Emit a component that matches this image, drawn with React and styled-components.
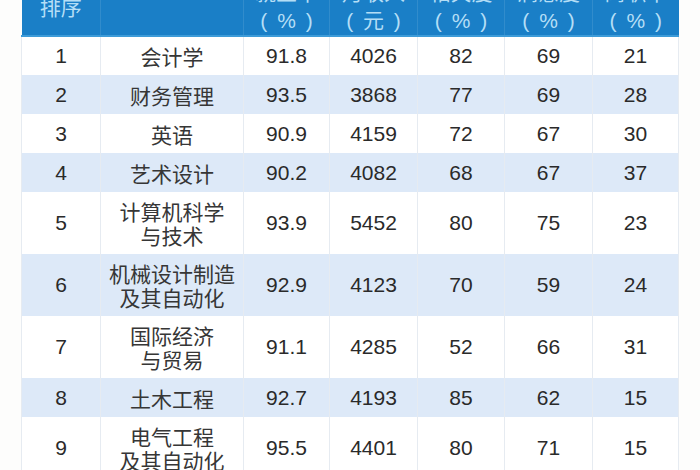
import React from 'react';
import styled, { createGlobalStyle } from 'styled-components';

const GlobalStyle = createGlobalStyle`
  html, body {
    margin: 0;
    padding: 0;
    background: #fdfdfc;
    overflow: hidden;
  }
`;

const columns = [79, 143, 86, 88, 87, 88, 86];

const headers = [
  ['排序'],
  [''],
  ['就业率', '( % )'],
  ['月收入', '( 元 )'],
  ['相关度', '( % )'],
  ['满意度', '( % )'],
  ['离职率', '( % )'],
];

const rows = [
  ['1', ['会计学'], '91.8', '4026', '82', '69', '21'],
  ['2', ['财务管理'], '93.5', '3868', '77', '69', '28'],
  ['3', ['英语'], '90.9', '4159', '72', '67', '30'],
  ['4', ['艺术设计'], '90.2', '4082', '68', '67', '37'],
  ['5', ['计算机科学', '与技术'], '93.9', '5452', '80', '75', '23'],
  ['6', ['机械设计制造', '及其自动化'], '92.9', '4123', '70', '59', '24'],
  ['7', ['国际经济', '与贸易'], '91.1', '4285', '52', '66', '31'],
  ['8', ['土木工程'], '92.7', '4193', '85', '62', '15'],
  ['9', ['电气工程', '及其自动化'], '95.5', '4401', '80', '71', '15'],
];

const Page = styled.div`
  height: 470px;
  overflow: hidden;
  padding-left: 21px;
`;

const Table = styled.table`
  margin-top: -23px;
  border-collapse: collapse;
  table-layout: fixed;
  width: 657px;
  font-family: "Liberation Sans", "Noto Sans CJK SC", sans-serif;
  color: #2a2a2a;
`;

const HeadCell = styled.th`
  height: 58px;
  padding: 0;
  background: #1a7fc7;
  color: #b4def6;
  font-weight: normal;
  font-size: 21px;
  line-height: 29px;
  text-align: center;
  border-left: 1px solid rgba(255, 255, 255, 0.1);
  border-bottom: 2px solid #3d9bd8;
  &:first-child {
    border-left: none;
  }
`;

const HeadLine = styled.div`
  font-family: ${(p) =>
    p.$cjk ? '"Noto Sans CJK SC", sans-serif' : '"Liberation Sans", "Noto Sans CJK SC", sans-serif'};
  word-spacing: 4px;
`;

const Row = styled.tr`
  background: ${(p) => (p.$shaded ? '#dde9f8' : '#ffffff')};
  height: ${(p) => (p.$tall ? 62 : 39)}px;
`;

const Cell = styled.td`
  padding: 0;
  text-align: center;
  vertical-align: middle;
  font-size: 21px;
  line-height: 24px;
  border-left: 1px solid #e6ebf1;
  border-right: 1px solid #e6ebf1;
`;

const Name = styled.span`
  display: block;
  font-family: "Noto Sans CJK SC", sans-serif;
  font-size: 21px;
  line-height: 24px;
  color: #363636;
`;

export default function App() {
  return (
    <Page>
      <GlobalStyle />
      <Table>
        <colgroup>
          {columns.map((w, i) => (
            <col key={i} style={{ width: w }} />
          ))}
        </colgroup>
        <thead>
          <tr>
            {headers.map((lines, i) => (
              <HeadCell key={i}>
                {lines.map((l, j) => (
                  <HeadLine key={j} $cjk={j === 0}>
                    {l}
                  </HeadLine>
                ))}
              </HeadCell>
            ))}
          </tr>
        </thead>
        <tbody>
          {rows.map(([rank, name, ...vals], i) => (
            <Row key={rank} $shaded={i % 2 === 1} $tall={name.length > 1}>
              <Cell>{rank}</Cell>
              <Cell>
                {name.map((n) => (
                  <Name key={n}>{n}</Name>
                ))}
              </Cell>
              {vals.map((v, j) => (
                <Cell key={j}>{v}</Cell>
              ))}
            </Row>
          ))}
        </tbody>
      </Table>
    </Page>
  );
}
